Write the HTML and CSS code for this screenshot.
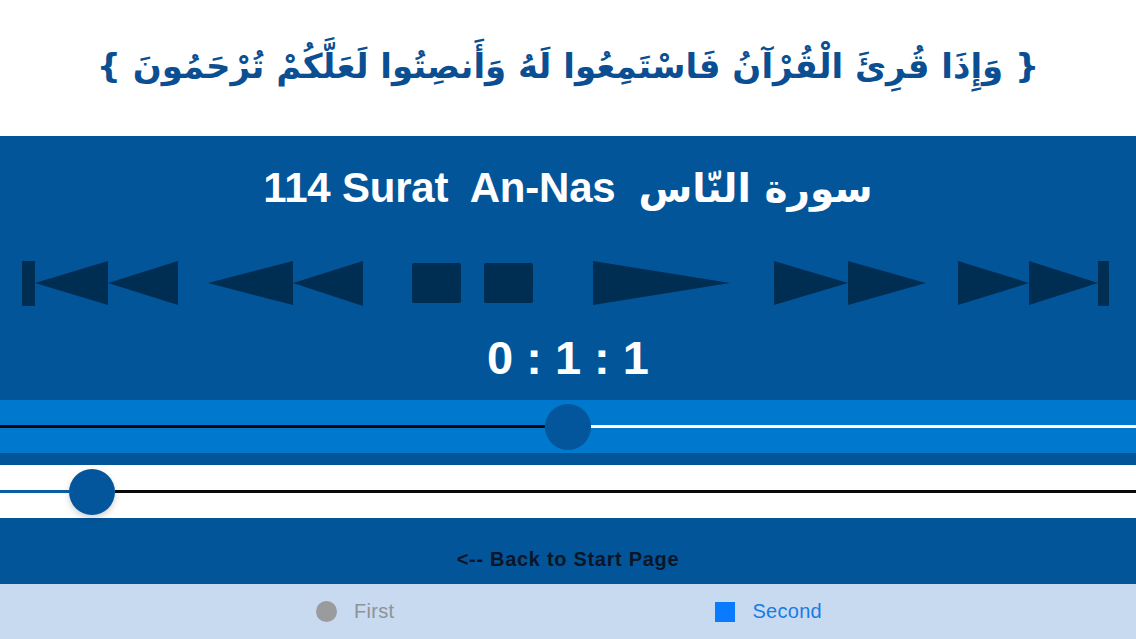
FILE: index.html
```html
<!DOCTYPE html>
<html lang="ar">
<head>
<meta charset="utf-8">
<title>An-Nas</title>
<link rel="stylesheet" href="styles.css">
</head>
<body>
<div class="screen">
  <header class="header">
    <p class="ayah" dir="rtl">{ وَإِذَا قُرِئَ الْقُرْآنُ فَاسْتَمِعُوا لَهُ وَأَنصِتُوا لَعَلَّكُمْ تُرْحَمُونَ }</p>
  </header>
  <main class="player">
    <h1 class="title" dir="ltr">114 Surat&nbsp; An-Nas&nbsp; <span dir="rtl">سورة النّاس</span></h1>
    <div class="controls">
      <svg class="ic ic-first" width="156" height="45" viewBox="0 0 156 45"><rect x="0" y="0" width="13" height="45"/><polygon points="13,22 86,0 86,44"/><polygon points="86,22 156,0 156,44"/></svg>
      <svg class="ic ic-rew" width="155" height="45" viewBox="0 0 155 45"><polygon points="0,22 85,0 85,44"/><polygon points="85,22 155,0 155,45"/></svg>
      <svg class="ic ic-stop" width="121" height="45" viewBox="0 0 121 45"><rect x="0" y="2" width="49" height="40" rx="2"/><rect x="72" y="2" width="49" height="40" rx="2"/></svg>
      <svg class="ic ic-play" width="137" height="45" viewBox="0 0 137 45"><polygon points="0,0 137,22 0,44"/></svg>
      <svg class="ic ic-ff" width="152" height="45" viewBox="0 0 152 45"><polygon points="0,0 74,22 0,44"/><polygon points="74,0 152,22 74,44"/></svg>
      <svg class="ic ic-last" width="151" height="45" viewBox="0 0 151 45"><polygon points="0,0 71,22 0,44"/><polygon points="71,0 140,22 71,44"/><rect x="140" y="0" width="11" height="45"/></svg>
    </div>
    <div class="time">0 : 1 : 1</div>
    <div class="slider slider-a">
      <div class="line line-black seg-a"></div>
      <div class="thumb"></div>
      <div class="line line-white grow"></div>
    </div>
    <div class="slider slider-b">
      <div class="line line-blue seg-b"></div>
      <div class="thumb thumb-shadow"></div>
      <div class="line line-black grow"></div>
    </div>
    <div class="back">&lt;-- Back to Start Page</div>
  </main>
  <nav class="tabbar">
    <div class="tab tab-first"><span class="dot"></span><span>First</span></div>
    <div class="tab tab-second"><span class="square"></span><span>Second</span></div>
  </nav>
</div>
</body>
</html>
```
FILE: styles.css
```css
html, body {
  margin: 0;
  padding: 0;
}
body {
  width: 1136px;
  height: 639px;
  overflow: hidden;
  font-family: "Liberation Sans", Arial, sans-serif;
  background: #ffffff;
}
.screen {
  display: flex;
  flex-direction: column;
  height: 639px;
}
.header {
  height: 136px;
  display: flex;
  align-items: center;
  justify-content: center;
  background: #ffffff;
}
.ayah {
  margin: 0;
  padding-bottom: 4px;
  font-family: "DejaVu Sans", sans-serif;
  font-weight: bold;
  font-size: 34px;
  line-height: 60px;
  color: #0b4f92;
  white-space: nowrap;
}
.player {
  height: 448px;
  background: #03559a;
  display: flex;
  flex-direction: column;
}
.title {
  margin: 27px 0 0;
  text-align: center;
  color: #ffffff;
  font-family: "Liberation Sans", "DejaVu Sans", sans-serif;
  font-weight: bold;
  font-size: 42px;
  line-height: 50px;
  letter-spacing: -0.2px;
}
.title span {
  font-family: "DejaVu Sans", sans-serif;
  font-size: 39px;
}
.controls {
  margin-top: 47px;
  height: 45px;
  display: flex;
  align-items: center;
  padding-left: 22px;
}
.ic {
  display: block;
  fill: #002d52;
}
.ic-rew { margin-left: 30px; }
.ic-stop { margin-left: 49px; }
.ic-play { margin-left: 60px; }
.ic-ff { margin-left: 44px; }
.ic-last { margin-left: 32px; }
.time {
  margin-top: 27px;
  height: 50px;
  line-height: 50px;
  text-align: center;
  color: #ffffff;
  font-weight: bold;
  font-size: 47px;
}
.slider {
  height: 53px;
  display: flex;
  align-items: center;
}
.slider-a {
  margin-top: 17px;
  background: #0078cd;
}
.slider-b {
  margin-top: 12px;
  background: #ffffff;
}
.line {
  height: 3px;
}
.line-black { background: #0a0a0a; }
.line-white { background: #ffffff; }
.line-blue { background: #0a5ea8; }
.grow { flex: 1; }
.seg-a { width: 545px; }
.seg-b { width: 69px; }
.thumb {
  width: 46px;
  height: 46px;
  border-radius: 50%;
  background: #03569b;
  flex: none;
}
.thumb-shadow {
  box-shadow: 0 3px 6px rgba(0, 0, 0, 0.18);
}
.back {
  margin-top: 29px;
  height: 24px;
  line-height: 24px;
  text-align: center;
  font-weight: bold;
  font-size: 20px;
  letter-spacing: 0.7px;
  color: #0a1628;
}
.tabbar {
  height: 55px;
  background: #c7daf0;
  display: flex;
  align-items: center;
}
.tab {
  display: flex;
  align-items: center;
  font-size: 20px;
  letter-spacing: 0.3px;
}
.tab-first {
  margin-left: 316px;
  color: #8f9296;
  gap: 17px;
}
.tab-second {
  margin-left: 321px;
  color: #1a7be6;
  gap: 17px;
}
.dot {
  width: 21px;
  height: 21px;
  border-radius: 50%;
  background: #9a9b9d;
}
.square {
  width: 20px;
  height: 20px;
  background: #0a7bff;
}
```
